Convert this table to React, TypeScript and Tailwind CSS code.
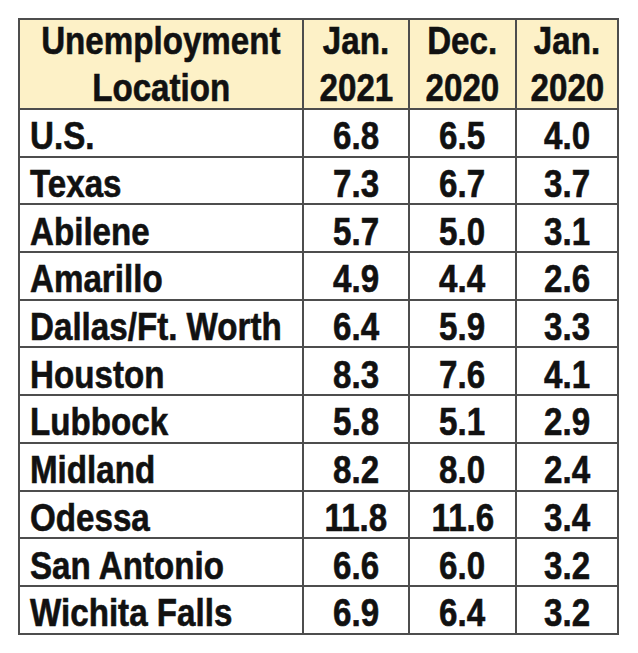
const rows: [string, string, string, string][] = [
  ["U.S.", "6.8", "6.5", "4.0"],
  ["Texas", "7.3", "6.7", "3.7"],
  ["Abilene", "5.7", "5.0", "3.1"],
  ["Amarillo", "4.9", "4.4", "2.6"],
  ["Dallas/Ft. Worth", "6.4", "5.9", "3.3"],
  ["Houston", "8.3", "7.6", "4.1"],
  ["Lubbock", "5.8", "5.1", "2.9"],
  ["Midland", "8.2", "8.0", "2.4"],
  ["Odessa", "11.8", "11.6", "3.4"],
  ["San Antonio", "6.6", "6.0", "3.2"],
  ["Wichita Falls", "6.9", "6.4", "3.2"],
]

const headers = [
  ["Unemployment", "Location"],
  ["Jan.", "2021"],
  ["Dec.", "2020"],
  ["Jan.", "2020"],
]

// no narrow face installed, so squeeze the text horizontally
const cell = "border-r-2 border-b-2 border-[#4d4d4d] flex items-center"
const narrow = "inline-block whitespace-nowrap scale-x-[0.85]"

export default function App() {
  return (
    <div className="w-[638px] h-[653px] bg-white pt-[18px] pl-[18px]">
      <div
        className="grid grid-cols-[284px_106px_107px_102px] w-[601px] border-l-2 border-t-2 border-[#4d4d4d] text-[#111] font-bold text-[39px] [-webkit-text-stroke:0.6px_#111]"
        style={{ fontFamily: '"Liberation Sans", Arial, sans-serif' }}
      >
        {headers.map((h, i) => (
          <div key={i} className={`${cell} h-[90px] bg-[#fdf1c7] flex-col justify-center text-center leading-[47px]`}>
            <span className={`${narrow} origin-center`}>{h[0]}</span>
            <span className={`${narrow} origin-center`}>{h[1]}</span>
          </div>
        ))}
        {rows.map((r) => (
          <div key={r[0]} className="contents">
            <div className={`${cell} h-[47.7px] pt-[6px] pl-[10px] leading-none`}>
              <span className={`${narrow} origin-left`}>{r[0]}</span>
            </div>
            {r.slice(1).map((v, j) => (
              <div key={j} className={`${cell} h-[47.7px] pt-[6px] justify-center leading-none`}>
                <span className={`${narrow} origin-center`}>{v}</span>
              </div>
            ))}
          </div>
        ))}
      </div>
    </div>
  )
}
